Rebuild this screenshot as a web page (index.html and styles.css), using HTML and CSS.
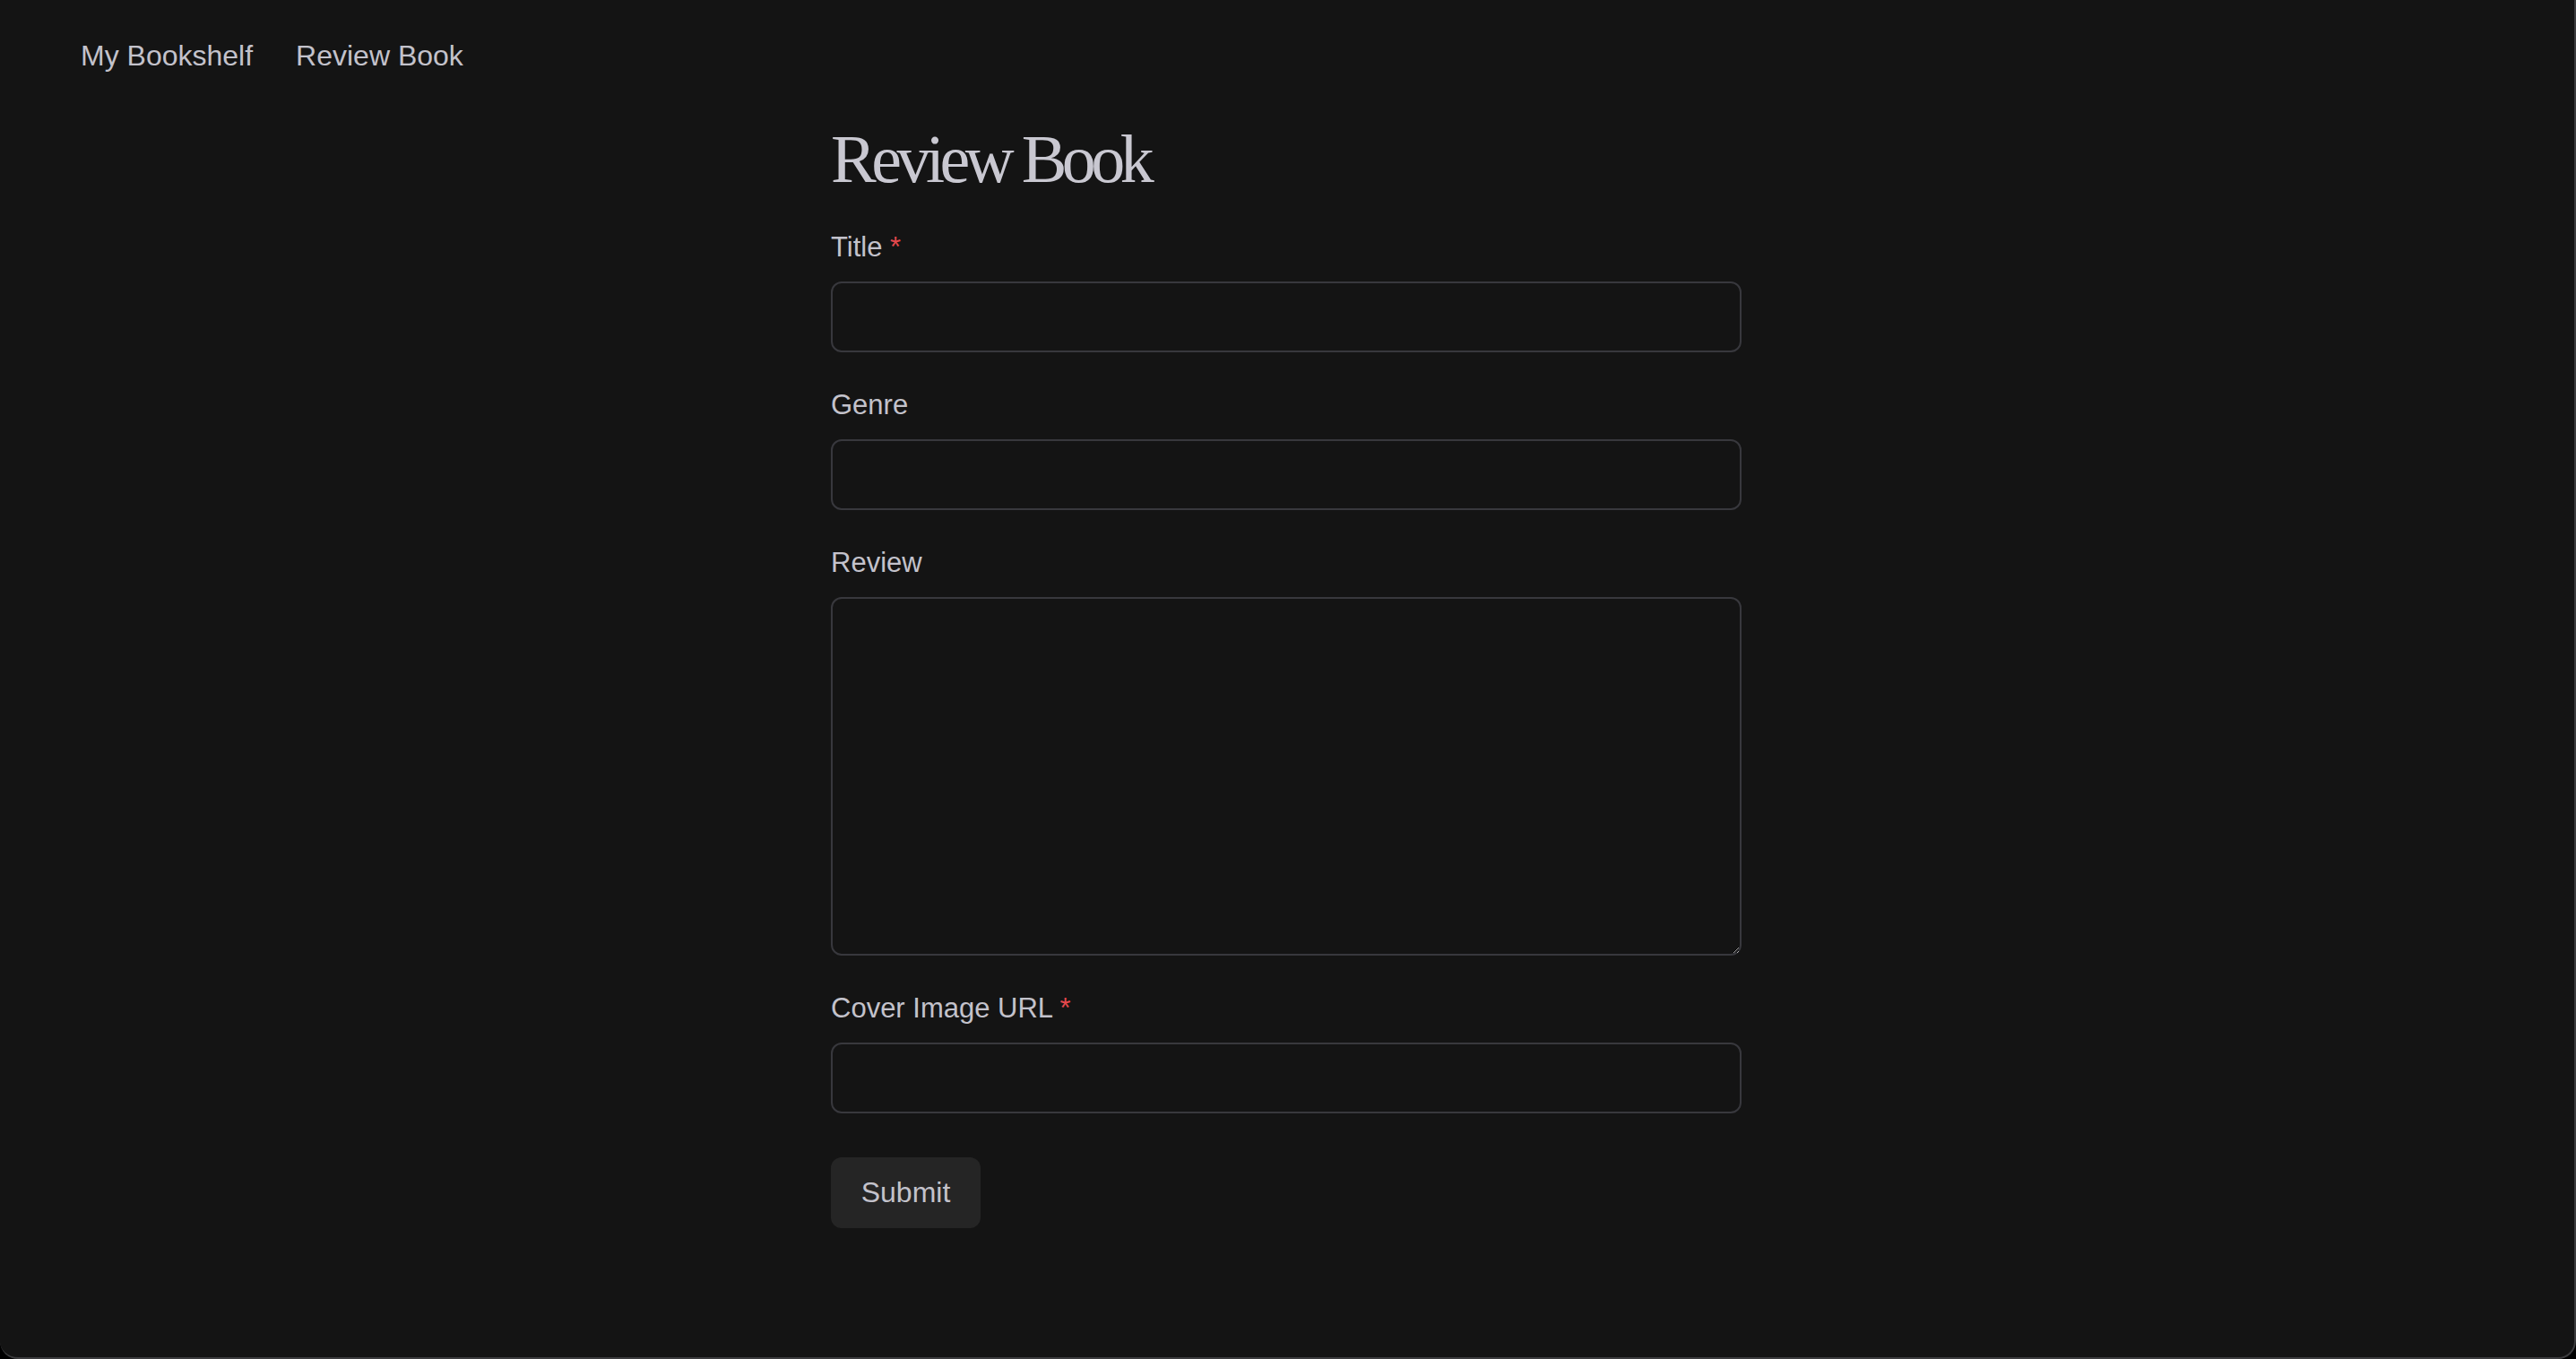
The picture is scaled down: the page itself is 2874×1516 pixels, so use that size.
FILE: index.html
```html
<!DOCTYPE html>
<html lang="en">
<head>
<meta charset="utf-8">
<title>Review Book</title>
<link rel="stylesheet" href="styles.css">
</head>
<body>
<div class="app">
  <nav class="nav">
    <a class="nav-link" href="#">My Bookshelf</a>
    <a class="nav-link" href="#">Review Book</a>
  </nav>
  <main class="main">
    <h1 class="heading">Review Book</h1>
    <form class="form">
      <div class="field">
        <label class="label" for="title">Title <span class="req">*</span></label>
        <input class="input" id="title" type="text">
      </div>
      <div class="field">
        <label class="label" for="genre">Genre</label>
        <input class="input" id="genre" type="text">
      </div>
      <div class="field">
        <label class="label" for="review">Review</label>
        <textarea class="input textarea" id="review"></textarea>
      </div>
      <div class="field">
        <label class="label" for="cover">Cover Image URL <span class="req">*</span></label>
        <input class="input" id="cover" type="text">
      </div>
      <div class="actions">
        <button class="button" type="button">Submit</button>
      </div>
    </form>
  </main>
</div>
</body>
</html>
```
FILE: styles.css
```css
html, body {
  margin: 0;
  padding: 0;
  background: #000;
  color-scheme: dark;
}

.app {
  box-sizing: border-box;
  min-height: 100vh;
  background: #141414;
  border-right: 2px solid #3c3c3e;
  border-bottom: 2px solid #3c3c3e;
  border-bottom-left-radius: 20px;
  border-bottom-right-radius: 20px;
  font-family: "Liberation Sans", Arial, sans-serif;
  color: #c3c2cb;
}

.nav {
  display: flex;
  gap: 48px;
  padding: 38px 90px 0;
  font-size: 32px;
  line-height: 48px;
}

.nav-link {
  color: #c3c2cb;
  text-decoration: none;
}

.main {
  width: 1016px;
  margin-left: calc(50% - 509px);
}

.heading {
  margin: 46px 0 29px;
  font-family: "Liberation Serif", "Times New Roman", serif;
  font-weight: normal;
  font-size: 76px;
  line-height: 91px;
  letter-spacing: -5.5px;
  color: #c9c8d1;
}

.form {
  display: flex;
  flex-direction: column;
  gap: 35px;
}

.field {
  display: flex;
  flex-direction: column;
  gap: 14px;
}

.label {
  font-size: 31px;
  line-height: 48px;
  color: #c3c2cb;
}

.req {
  color: #e5484d;
}

.input {
  box-sizing: border-box;
  width: 100%;
  height: 79px;
  margin: 0;
  padding: 0 20px;
  background: #141414;
  border: 2px solid #38383d;
  border-radius: 12px;
  color: #c3c2cb;
  font-family: inherit;
  font-size: 31px;
  outline: none;
}

.textarea {
  height: 400px;
  padding: 16px 20px;
  resize: vertical;
  display: block;
}

.actions {
  display: flex;
  padding-top: 14px;
}

.button {
  box-sizing: border-box;
  width: 167px;
  height: 79px;
  background: #252525;
  border: none;
  border-radius: 12px;
  color: #c3c2cb;
  font-family: "Liberation Sans", Arial, sans-serif;
  font-size: 32px;
  cursor: pointer;
}
```
